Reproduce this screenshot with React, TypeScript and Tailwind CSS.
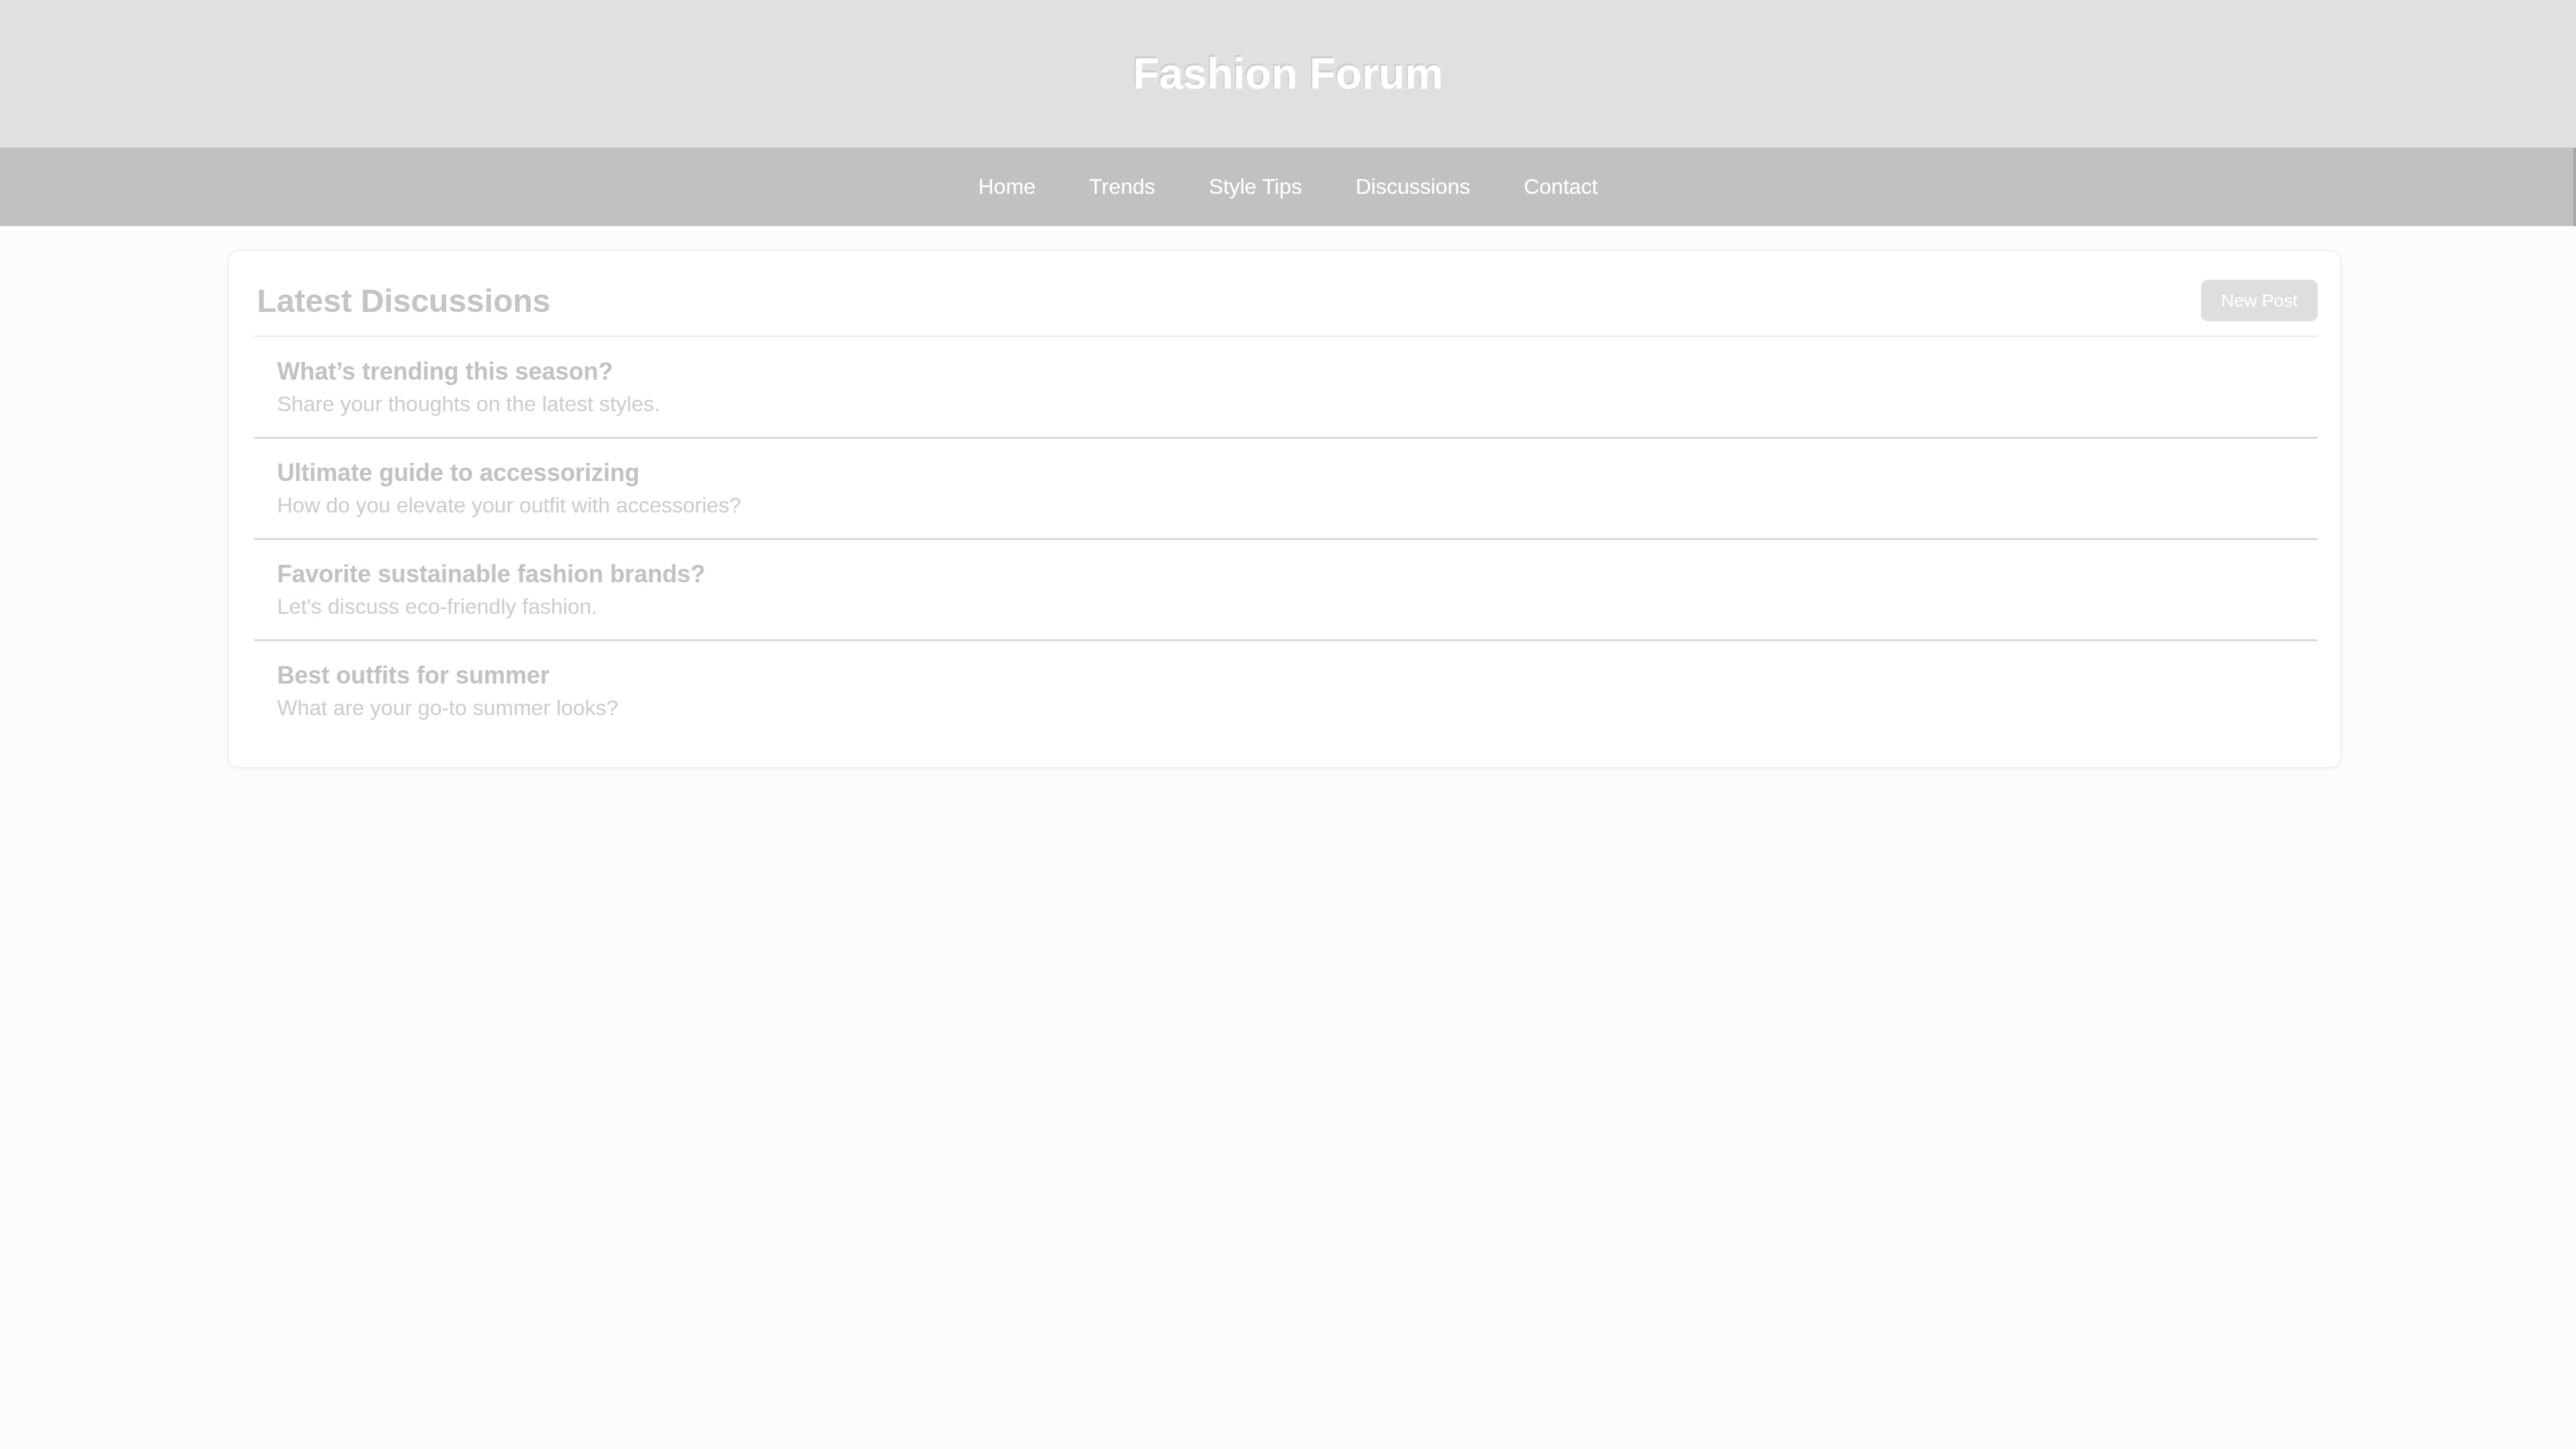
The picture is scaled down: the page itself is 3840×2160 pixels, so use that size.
import React from "react";

const items = [
  { t: "What’s trending this season?", d: "Share your thoughts on the latest styles." },
  { t: "Ultimate guide to accessorizing", d: "How do you elevate your outfit with accessories?" },
  { t: "Favorite sustainable fashion brands?", d: "Let's discuss eco-friendly fashion." },
  { t: "Best outfits for summer", d: "What are your go-to summer looks?" },
];

export default function App() {
  return (
    <div
      className="min-h-[2160px] w-full bg-[#fcfcfc]"
      style={{ fontFamily: '"Liberation Sans", Arial, sans-serif' }}
    >
      <header className="flex h-[220px] items-center justify-center bg-[#e0e0e0]">
        <h1 className="text-[64px] font-bold leading-none text-white [text-shadow:-2px_-3px_0_rgba(0,0,0,0.08)]">
          Fashion Forum
        </h1>
      </header>
      <nav className="flex h-[117px] items-center justify-center gap-[80px] bg-[#c1c1c1] border-r-[4px] border-[#a8a8a8] pl-[4px]">
        {["Home", "Trends", "Style Tips", "Discussions", "Contact"].map((n) => (
          <a key={n} className="text-[32px] leading-[37px] text-white">
            {n}
          </a>
        ))}
      </nav>
      <main className="pt-[36px]">
        <section className="ml-[340px] w-[3150px] rounded-[16px] border border-[#e4e4e4] bg-white pl-[38px] pr-[34px] pt-[43px] pb-[46px] shadow-[0_2px_8px_rgba(0,0,0,0.04)]">
          <div className="flex items-center justify-between border-b-[3px] border-[#f0f0f0] pb-[21px] pl-[4px]">
            <h2 className="text-[48px] font-bold leading-[55px] text-[#c4c4c4]">Latest Discussions</h2>
            <button className="rounded-[10px] bg-[#dedede] px-[30px] py-[16px] text-[26.67px] leading-[30px] text-white">
              New Post
            </button>
          </div>
          <ul>
            {items.map((it, i) => (
              <li
                key={i}
                className={
                  i < items.length - 1
                    ? "border-b-[3px] border-[#d9d9d9] pl-[34px] pr-[30px] py-[30px]"
                    : "pl-[34px] pr-[30px] pt-[30px] pb-[24px]"
                }
              >
                <h3 className="mb-[10px] text-[36px] font-bold leading-[41px] text-[#c2c2c2]">{it.t}</h3>
                <p className="text-[32px] leading-[37px] text-[#cdcdcd]">{it.d}</p>
              </li>
            ))}
          </ul>
        </section>
      </main>
    </div>
  );
}
